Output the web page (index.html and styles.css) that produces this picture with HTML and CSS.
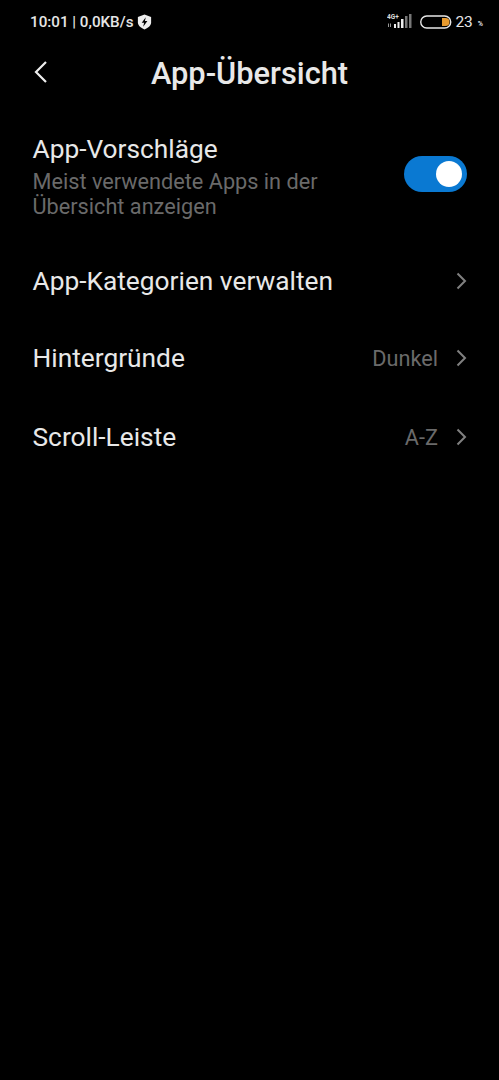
FILE: index.html
```html
<!DOCTYPE html>
<html lang="de">
<head>
<meta charset="utf-8">
<title>App-Übersicht</title>
<link rel="stylesheet" href="styles.css">
</head>
<body>
<div class="status">
  <div class="status-left">
    <span>10:01 | 0,0KB/s</span>
    <svg class="shield" width="15" height="16" viewBox="0 0 14 15"><path d="M7 .5 13.200 2.800v5c0 3-2.500 5.300-6.200 6.700C3.300 13.100.8 10.800.8 7.800v-5z" fill="#eee"/><path d="M8.200 3 4.400 8.200h2.200L5.800 12l3.900-5.400H7.400z" fill="#000"/></svg>
  </div>
  <div class="status-right">
    <svg class="signal" width="26" height="16" viewBox="0 0 26 16">
      <text x="0" y="6" class="net">4G+</text>
      <rect x="1" y="10.500" width="1" height="3.500" fill="#999"/><rect x="3" y="10.500" width="1" height="3.500" fill="#999"/>
      <rect x="7" y="11" width="2" height="4" fill="#eee"/>
      <rect x="10.500" y="9" width="2" height="6" fill="#eee"/>
      <rect x="14" y="6" width="2.500" height="9" fill="#eee"/>
      <rect x="18" y="3" width="2.500" height="12" fill="#777"/>
      <rect x="22" y="1" width="2.500" height="14" fill="#777"/>
    </svg>
    <svg class="battery" width="32" height="14" viewBox="0 0 32 14">
      <rect x=".75" y="1" width="30" height="12" rx="6" fill="none" stroke="#e8e8e8" stroke-width="1.400"/>
      <path d="M22 3h3.500a4 4 0 0 1 0 8H22z" fill="#e79a2e"/>
    </svg>
    <span class="pct">23</span><span class="pct-sign">%</span>
  </div>
</div>

<header class="title-bar">
  <svg class="back" width="16" height="24" viewBox="0 0 16 24"><path d="M13 2 3 12l10 10" fill="none" stroke="#eee" stroke-width="2.200"/></svg>
  <h1>App-Übersicht</h1>
</header>

<main class="list">
  <div class="row row-toggle">
    <div class="texts">
      <div class="label">App-Vorschläge</div>
      <div class="desc">Meist verwendete Apps in der<br>Übersicht anzeigen</div>
    </div>
    <div class="switch"><span class="knob"></span></div>
  </div>
  <div class="row row-cat">
    <div class="label">App-Kategorien verwalten</div>
    <div class="end"><svg class="chev" width="11" height="18" viewBox="0 0 11 18"><path d="M1.500 1.500 9 9l-7.500 7.500" fill="none" stroke="#808080" stroke-width="2"/></svg></div>
  </div>
  <div class="row row-bg">
    <div class="label">Hintergründe</div>
    <div class="end"><span class="value">Dunkel</span><svg class="chev" width="11" height="18" viewBox="0 0 11 18"><path d="M1.500 1.500 9 9l-7.500 7.500" fill="none" stroke="#808080" stroke-width="2"/></svg></div>
  </div>
  <div class="row row-scroll">
    <div class="label">Scroll-Leiste</div>
    <div class="end"><span class="value">A-Z</span><svg class="chev" width="11" height="18" viewBox="0 0 11 18"><path d="M1.500 1.500 9 9l-7.500 7.500" fill="none" stroke="#808080" stroke-width="2"/></svg></div>
  </div>
</main>
</body>
</html>
```
FILE: styles.css
```css
* { box-sizing: border-box; }
html, body { margin: 0; padding: 0; }
body {
  width: 499px;
  height: 1080px;
  background: #000;
  color: #e8e8e8;
  font-family: Roboto, "Liberation Sans", sans-serif;
  overflow: hidden;
}
.status {
  height: 44px;
  display: flex;
  justify-content: space-between;
  align-items: center;
  padding: 0 16px 0 30px;
  font-size: 15.200px;
  font-weight: 500;
  color: #e6e6e6;
}
.status-left { display: flex; align-items: center; gap: 4px; }
.status-right { display: flex; align-items: center; }
.signal { margin-right: 7px; margin-top: -3px; }
.net { font-size: 6.500px; font-weight: 700; fill: #ddd; font-family: Roboto, sans-serif; }
.pct { margin-left: 3px; font-size: 15.500px; font-weight: 400; }
.pct-sign { margin-left: 5px; font-size: 7px; margin-top: 4px; color: #fff; }
.title-bar {
  height: 58px;
  display: flex;
  align-items: center;
  justify-content: center;
  position: relative;
}
.back { position: absolute; left: 33px; top: 16px; }
h1 { margin: 0; font-size: 30.800px; font-weight: 500; color: #e8e8e8; }
.list { padding: 0 32px 0 32.500px; }
.row { display: flex; justify-content: space-between; align-items: center; }
.label { font-size: 26.300px; line-height: 30px; color: #e8e8e8; }
.desc { font-size: 21.700px; line-height: 25px; color: #6a6a6a; margin-top: 5px; }
.row-toggle { margin-top: 31px; height: 86px; }
.row-cat { margin-top: 36px; height: 52px; }
.row-bg { margin-top: 25px; height: 52px; }
.row-scroll { margin-top: 27px; height: 52px; }
.switch {
  width: 63px;
  height: 36px;
  border-radius: 18px;
  background: #0a79d2;
  display: flex;
  align-items: center;
  justify-content: flex-end;
  padding-right: 5px;
  margin-bottom: 5px;
}
.knob { width: 26px; height: 26px; border-radius: 50%; background: #fff; }
.end { display: flex; align-items: center; }
.value { font-size: 21.700px; color: #6a6a6a; margin-right: 18px; }
.chev { margin-right: 0; }
```
